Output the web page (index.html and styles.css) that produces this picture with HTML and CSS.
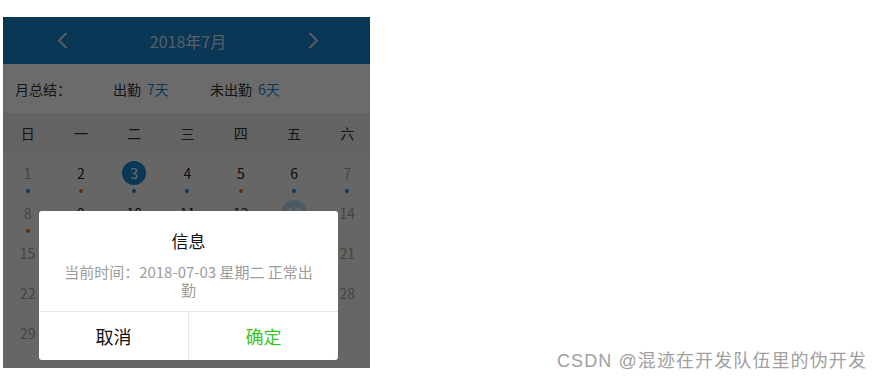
FILE: index.html
```html
<!DOCTYPE html>
<html lang="zh-CN">
<head>
    <meta charset="UTF-8">
    <meta name="viewport" content="width=device-width, initial-scale=1.0">
    <title>考勤日历</title>
    <link rel="stylesheet" href="styles.css">
</head>
<body>
    <div class="phone">
        <div class="screen">
            <header class="month-bar">
                <span class="arrow">
                    <svg width="11" height="17" viewBox="0 0 11 17"><path d="M9.5 1 L2 8.5 L9.5 16" fill="none" stroke="currentColor" stroke-width="1.9"/></svg>
                </span>
                <span class="month-title">2018年7月</span>
                <span class="arrow">
                    <svg width="11" height="17" viewBox="0 0 11 17"><path d="M1.5 1 L9 8.5 L1.5 16" fill="none" stroke="currentColor" stroke-width="1.9"/></svg>
                </span>
            </header>

            <div class="summary">
                <span class="summary-label">月总结：</span>
                <span class="summary-item">出勤<em>7天</em></span>
                <span class="summary-item">未出勤<em>6天</em></span>
            </div>

            <div class="week">
                <span>日</span><span>一</span><span>二</span><span>三</span><span>四</span><span>五</span><span>六</span>
            </div>

            <div class="days" id="days"></div>
        </div>

        <div class="mask"></div>

        <div class="dialog">
            <div class="dialog-title">信息</div>
            <div class="dialog-text">当前时间：2018-07-03 星期二 正常出勤</div>
            <div class="dialog-buttons">
                <button class="btn-cancel">取消</button>
                <button class="btn-ok">确定</button>
            </div>
        </div>
    </div>

    <div class="watermark">CSDN @混迹在开发队伍里的伪开发</div>

    <script>
        // July 2018 starts on a Sunday
        const marks = {1: 'ok', 2: 'miss', 3: 'ok', 4: 'ok', 5: 'miss', 6: 'ok', 7: 'ok', 8: 'miss'};
        const days = document.getElementById('days');

        for (let d = 1; d <= 31; d++) {
            const cell = document.createElement('div');
            cell.className = 'day';
            const weekday = (d - 1) % 7;
            if (weekday === 0 || weekday === 6) cell.classList.add('weekend');
            if (d === 3) cell.classList.add('selected');
            if (d === 13) cell.classList.add('today');

            let html = '<span class="num">' + d + '</span>';
            if (marks[d]) html += '<i class="dot ' + marks[d] + '"></i>';
            cell.innerHTML = html;
            days.appendChild(cell);
        }
    </script>
</body>
</html>
```

FILE: styles.css
```css
body {
    margin: 0;
    height: 100vh;
    display: flex;
    background-color: #fff;
    font-family: "Noto Sans CJK SC", "Noto Sans", sans-serif;
}
.phone {
    position: relative;
    width: 367px;
    height: 351px;
    margin: 17px 0 0 3px;
    overflow: hidden;
    background-color: #f3f3f3;
}
.screen {
    width: 373px;
    margin-left: -2px;
}
.month-bar {
    height: 47px;
    display: flex;
    align-items: center;
    justify-content: space-between;
    padding: 0 55px 0 56px;
    background-color: #1883cd;
    color: #cfe2f2;
}
.arrow {
    display: flex;
}
.month-title {
    font-size: 16px;
}
.summary {
    height: 49px;
    display: flex;
    align-items: center;
    padding-left: 14px;
    font-size: 14px;
    color: #333;
    background-color: #fff;
}
.summary-label {
    width: 98px;
}
.summary-item {
    width: 97px;
}
.summary-item em {
    margin-left: 6px;
    font-style: normal;
    color: #1883cd;
}
.week {
    height: 40px;
    display: grid;
    grid-template-columns: repeat(7, 1fr);
    align-items: center;
    text-align: center;
    font-size: 14px;
    color: #333;
    background-color: #ebebeb;
}
.days {
    display: grid;
    grid-template-columns: repeat(7, 1fr);
}
.day {
    height: 40px;
    display: flex;
    flex-direction: column;
    align-items: center;
    padding-top: 8px;
    box-sizing: border-box;
    font-size: 14px;
    color: #222;
}
.day.weekend {
    color: #a2a2a2;
}
.num {
    width: 24px;
    height: 24px;
    line-height: 24px;
    text-align: center;
    border-radius: 50%;
}
.day.selected .num {
    background-color: #1883cd;
    color: #fff;
}
.day.today .num {
    width: 26px;
    height: 26px;
    line-height: 26px;
    margin-top: -1px;
    background-color: #b9d6ec;
    color: #fff;
}
.dot {
    width: 4px;
    height: 4px;
    margin-top: 4px;
    border-radius: 50%;
}
.dot.ok {
    background-color: #1883cd;
}
.dot.miss {
    background-color: #e8662e;
}
.mask {
    position: absolute;
    inset: 0;
    background-color: rgba(0, 0, 0, 0.58);
}
.dialog {
    position: absolute;
    left: 36px;
    top: 194px;
    width: 299px;
    height: 149px;
    display: flex;
    flex-direction: column;
    background-color: #fff;
    border-radius: 3px;
    overflow: hidden;
}
.dialog-title {
    padding-top: 20px;
    line-height: 20px;
    font-size: 17px;
    text-align: center;
    color: #111;
}
.dialog-text {
    margin-top: 12px;
    padding: 0 20px;
    line-height: 18px;
    font-size: 15px;
    text-align: center;
    color: #9c9c9c;
}
.dialog-buttons {
    margin-top: auto;
    height: 48px;
    display: flex;
    border-top: 1px solid #e6e6e6;
}
.dialog-buttons button {
    flex: 1;
    border: 0;
    background: none;
    font-family: inherit;
    font-size: 18px;
    padding: 0;
}
.btn-cancel {
    color: #111;
    border-right: 1px solid #e6e6e6 !important;
}
.btn-ok {
    color: #3cc51f;
}
.watermark {
    align-self: flex-end;
    margin: 0 16px 9px auto;
    line-height: 20px;
    font-family: "Liberation Sans", "Noto Sans CJK SC", sans-serif;
    font-size: 18px;
    letter-spacing: 1.1px;
    color: #a0a0a0;
}
```
